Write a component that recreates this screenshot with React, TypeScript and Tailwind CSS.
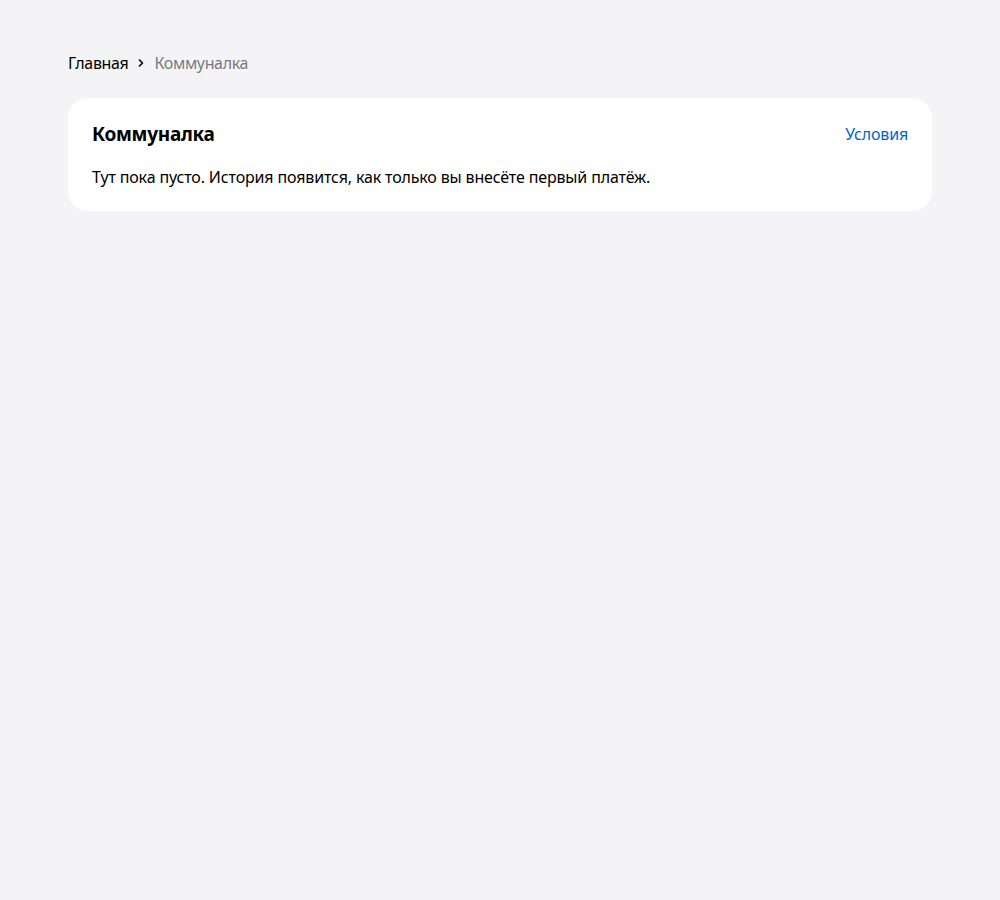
export default function App() {
  return (
    <div className="min-h-[900px] w-full bg-[#f4f4f6] px-[68px] pt-[51px] font-['Noto_Sans',sans-serif] tracking-[-0.15px] text-black">
      <nav className="flex h-6 items-center text-[16px] leading-6 tracking-[-0.35px]">
        <span className="text-black">Главная</span>
        <svg className="mx-[9px]" width="8" height="10" viewBox="0 0 8 10" fill="none">
          <path d="M2.5 2 L5.5 5 L2.5 8" stroke="#000" strokeWidth="1.6" strokeLinecap="round" strokeLinejoin="round" />
        </svg>
        <span className="text-[#7a7a7e]">Коммуналка</span>
      </nav>
      <div className="mt-[23px] rounded-[20px] bg-white px-6 pb-[22px] pt-[22px]">
        <div className="flex items-center justify-between">
          <h1 className="text-[19px] font-bold leading-7 tracking-[-0.3px]">Коммуналка</h1>
          <a className="text-[16px] leading-6 text-[#0063d6]" href="#">
            Условия
          </a>
        </div>
        <p className="mt-[17px] text-[16px] leading-6">
          Тут пока пусто. История появится, как только вы внесёте первый платёж.
        </p>
      </div>
    </div>
  );
}
